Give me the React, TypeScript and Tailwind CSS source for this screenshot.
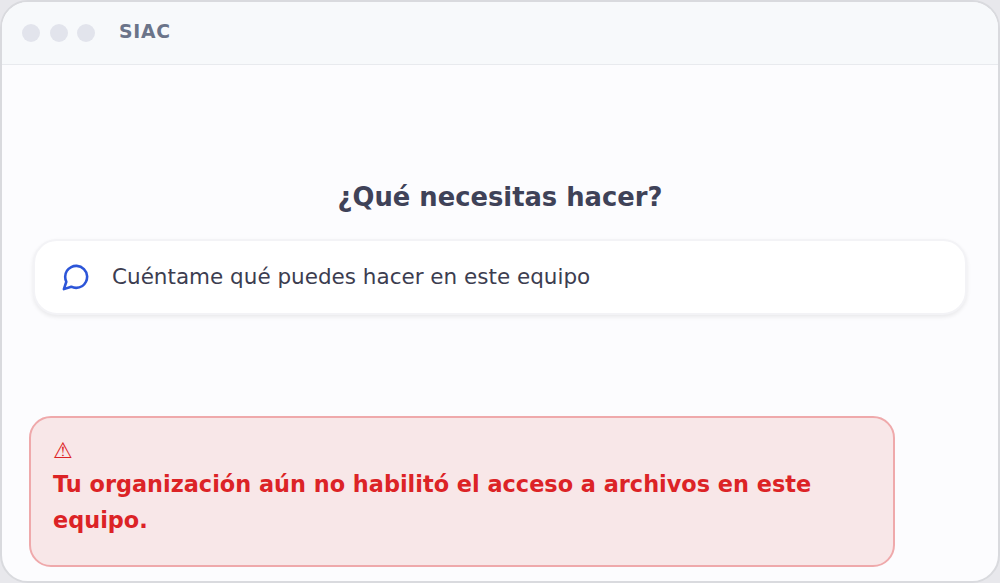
import React from "react";

function ChatIcon() {
  return (
    <svg
      viewBox="0 0 24 24"
      className="mr-[21px] size-[31px] shrink-0 fill-none stroke-[#2c55d8] stroke-2"
      strokeLinecap="round"
      strokeLinejoin="round"
      aria-hidden="true"
    >
      <path d="M21 11.5a8.38 8.38 0 0 1-.9 3.8 8.5 8.5 0 0 1-7.6 4.7 8.38 8.38 0 0 1-3.8-.9L3 21l1.9-5.7a8.38 8.38 0 0 1-.9-3.8 8.5 8.5 0 0 1 4.7-7.6 8.38 8.38 0 0 1 3.8-.9h.5a8.48 8.48 0 0 1 8 8v.5z" />
    </svg>
  );
}

export default function App() {
  return (
    <div className="h-[583px] w-[1000px] bg-[#e8e8ec] font-['DejaVu_Sans',sans-serif]">
      <main className="flex h-full flex-col overflow-hidden rounded-[28px] border-2 border-[#d9dade] bg-[#fcfcfe]">
        <header className="flex h-[63px] shrink-0 items-center border-b border-[#e8eaee] bg-[#f7f9fb] pl-5">
          <div className="flex gap-[9.5px]">
            <span className="size-[18px] rounded-full bg-[#e2e4ec]" />
            <span className="size-[18px] rounded-full bg-[#e2e4ec]" />
            <span className="size-[18px] rounded-full bg-[#e2e4ec]" />
          </div>
          <span className="-mt-[3px] ml-6 text-[18.8px] font-bold leading-6 tracking-[0.7px] text-[#6b7489]">SIAC</span>
        </header>
        <h1 className="mt-[112px] text-center text-[25.8px] font-bold leading-10 text-[#3f4258]">¿Qué necesitas hacer?</h1>
        <button className="mx-[31px] mt-[22px] flex h-[76px] shrink-0 items-center rounded-[24px] border-2 border-[#f3f3f6] bg-white pl-[25px] text-left text-[21.5px] text-[#3c3d50] shadow-[0_2px_4px_rgba(0,0,0,0.08)]">
          <ChatIcon />
          <span className="mt-px">Cuéntame qué puedes hacer en este equipo</span>
        </button>
        <section className="mt-[101px] ml-[27px] flex h-[151px] w-[866px] shrink-0 flex-col rounded-[22px] border-2 border-[#efa9ab] bg-[#f8e7e8] pt-[15px] pl-[22px] text-[22.4px] leading-9 text-[#dc2326]">
          <span className="h-[33px] text-[22px]">⚠</span>
          <p className="w-[790px] font-bold">Tu organización aún no habilitó el acceso a archivos en este equipo.</p>
        </section>
      </main>
    </div>
  );
}
